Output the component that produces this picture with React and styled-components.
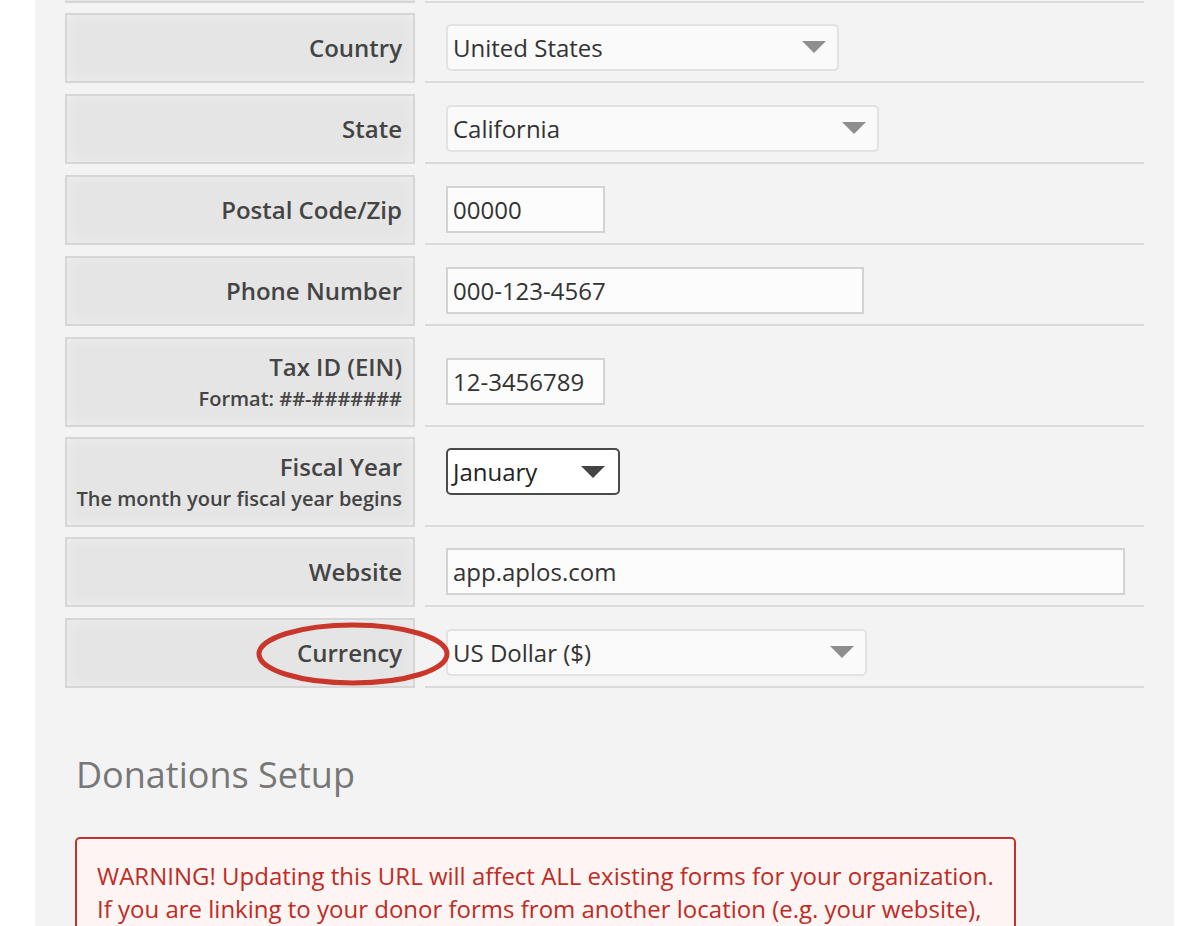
import styled, { createGlobalStyle } from "styled-components";

const GlobalStyle = createGlobalStyle`
  html, body {
    margin: 0;
    padding: 0;
    background: #ffffff;
  }
  body {
    font-family: 'Open Sans', 'Liberation Sans', sans-serif;
    overflow: hidden;
  }
`

const Page = styled.div`
  width: 1180px;
  height: 926px;
  overflow: hidden;
  background: #ffffff;
`

const Panel = styled.div`
  margin-left: 35px;
  width: 1139px;
  min-height: 926px;
  box-sizing: border-box;
  background: #f3f3f3;
  padding: 0 30px 0 30px;
`

const Row = styled.div`
  display: grid;
  grid-template-columns: 350px 1fr;
  column-gap: 10px;
  margin-bottom: ${p => p.$gap || 11}px;
`

const Label = styled.div`
  position: relative;
  box-sizing: border-box;
  height: ${p => p.$tall ? 90 : 70}px;
  border: 2px solid #d6d6d6;
  background: #e5e5e5;
  box-shadow: inset 0 0 14px rgba(255, 255, 255, 0.35);
  display: flex;
  flex-direction: column;
  justify-content: center;
  align-items: flex-end;
  padding-right: 11px;
  color: #444444;
`

const LabelStub = styled.div`
  height: 3px;
  box-sizing: border-box;
  border-bottom: 2px solid #d6d6d6;
  background: #e5e5e5;
`

const FieldStub = styled.div`
  height: 3px;
  box-sizing: border-box;
  border-bottom: 2px solid #dadada;
`

const Title = styled.div`
  font-size: 24px;
  font-weight: 600;
  line-height: 34px;
`

const Sub = styled.div`
  font-size: 20px;
  font-weight: 600;
  line-height: 30px;
`

const Field = styled.div`
  box-sizing: border-box;
  border-bottom: 2px solid #dadada;
  display: flex;
  align-items: ${p => p.$top ? "flex-start" : "center"};
  padding-top: ${p => p.$top ? 11 : 0}px;
  padding-left: 21px;
`

const Select = styled.div`
  position: relative;
  box-sizing: border-box;
  width: ${p => p.$w}px;
  height: 47px;
  display: flex;
  align-items: center;
  padding-left: 5px;
  font-size: 24px;
  color: ${p => p.$dark ? "#222222" : "#333333"};
  background: ${p => p.$dark ? "#ffffff" : "#fafafa"};
  border: 2px solid ${p => p.$dark ? "#4a4a4a" : "#e2e2e2"};
  border-radius: 5px;
  &::after {
    content: "";
    position: absolute;
    right: ${p => p.$dark ? 13 : 11}px;
    top: 50%;
    margin-top: -6px;
    border-left: 12px solid transparent;
    border-right: 12px solid transparent;
    border-top: 12px solid ${p => p.$dark ? "#444444" : "#8e8e8e"};
  }
`

const Input = styled.div`
  box-sizing: border-box;
  width: ${p => p.$w}px;
  height: 47px;
  display: flex;
  align-items: center;
  padding-left: 5px;
  font-size: 24px;
  color: #333333;
  background: #fcfcfc;
  border: 2px solid #d3d3d3;
`

const Ring = styled.svg`
  position: absolute;
  left: 189px;
  top: 1px;
  width: 194px;
  height: 66px;
  overflow: visible;
  pointer-events: none;
  z-index: 2;
`

const SectionTitle = styled.h2`
  margin: 62px 0 0 11px;
  font-size: 36px;
  font-weight: 400;
  line-height: 50px;
  color: #777777;
`

const Warning = styled.div`
  margin: 37px 0 0 10px;
  width: 941px;
  box-sizing: border-box;
  padding: 20px 20px;
  border: 2px solid #c3312a;
  border-radius: 5px;
  background: #fdf5f3;
  color: #bf2b25;
  font-size: 24px;
  line-height: 33px;
`

const rows = [
  { label: "Country", kind: "select", value: "United States", w: 393 },
  { label: "State", kind: "select", value: "California", w: 433 },
  { label: "Postal Code/Zip", kind: "input", value: "00000", w: 159 },
  { label: "Phone Number", kind: "input", value: "000-123-4567", w: 418 },
  { label: "Tax ID (EIN)", sub: "Format: ##-#######", kind: "input", value: "12-3456789", w: 159, gap: 10 },
  { label: "Fiscal Year", sub: "The month your fiscal year begins", kind: "dark", value: "January", w: 174, gap: 10 },
  { label: "Website", kind: "input", value: "app.aplos.com", w: 679 },
  { label: "Currency", kind: "select", value: "US Dollar ($)", w: 421, ring: true },
]

const App = () => {
  return (
    <Page>
      <GlobalStyle />
      <Panel>
        <Row $gap={10}>
          <LabelStub />
          <FieldStub />
        </Row>
        {rows.map(r => (
          <Row key={r.label} $gap={r.gap}>
            <Label $tall={!!r.sub}>
              <Title>{r.label}</Title>
              {r.sub && <Sub>{r.sub}</Sub>}
              {r.ring && (
                <Ring viewBox="0 0 194 66">
                  <ellipse cx="97" cy="33" rx="94" ry="29" fill="none" stroke="#c9372b" strokeWidth="5" />
                </Ring>
              )}
            </Label>
            <Field $top={r.kind === "dark"}>
              {r.kind === "input" ? (
                <Input $w={r.w}>{r.value}</Input>
              ) : (
                <Select $w={r.w} $dark={r.kind === "dark"}>{r.value}</Select>
              )}
            </Field>
          </Row>
        ))}
        <SectionTitle>Donations Setup</SectionTitle>
        <Warning>
          WARNING! Updating this URL will affect ALL existing forms for your organization.
          If you are linking to your donor forms from another location (e.g. your website),
        </Warning>
      </Panel>
    </Page>
  )
}

export default App;
